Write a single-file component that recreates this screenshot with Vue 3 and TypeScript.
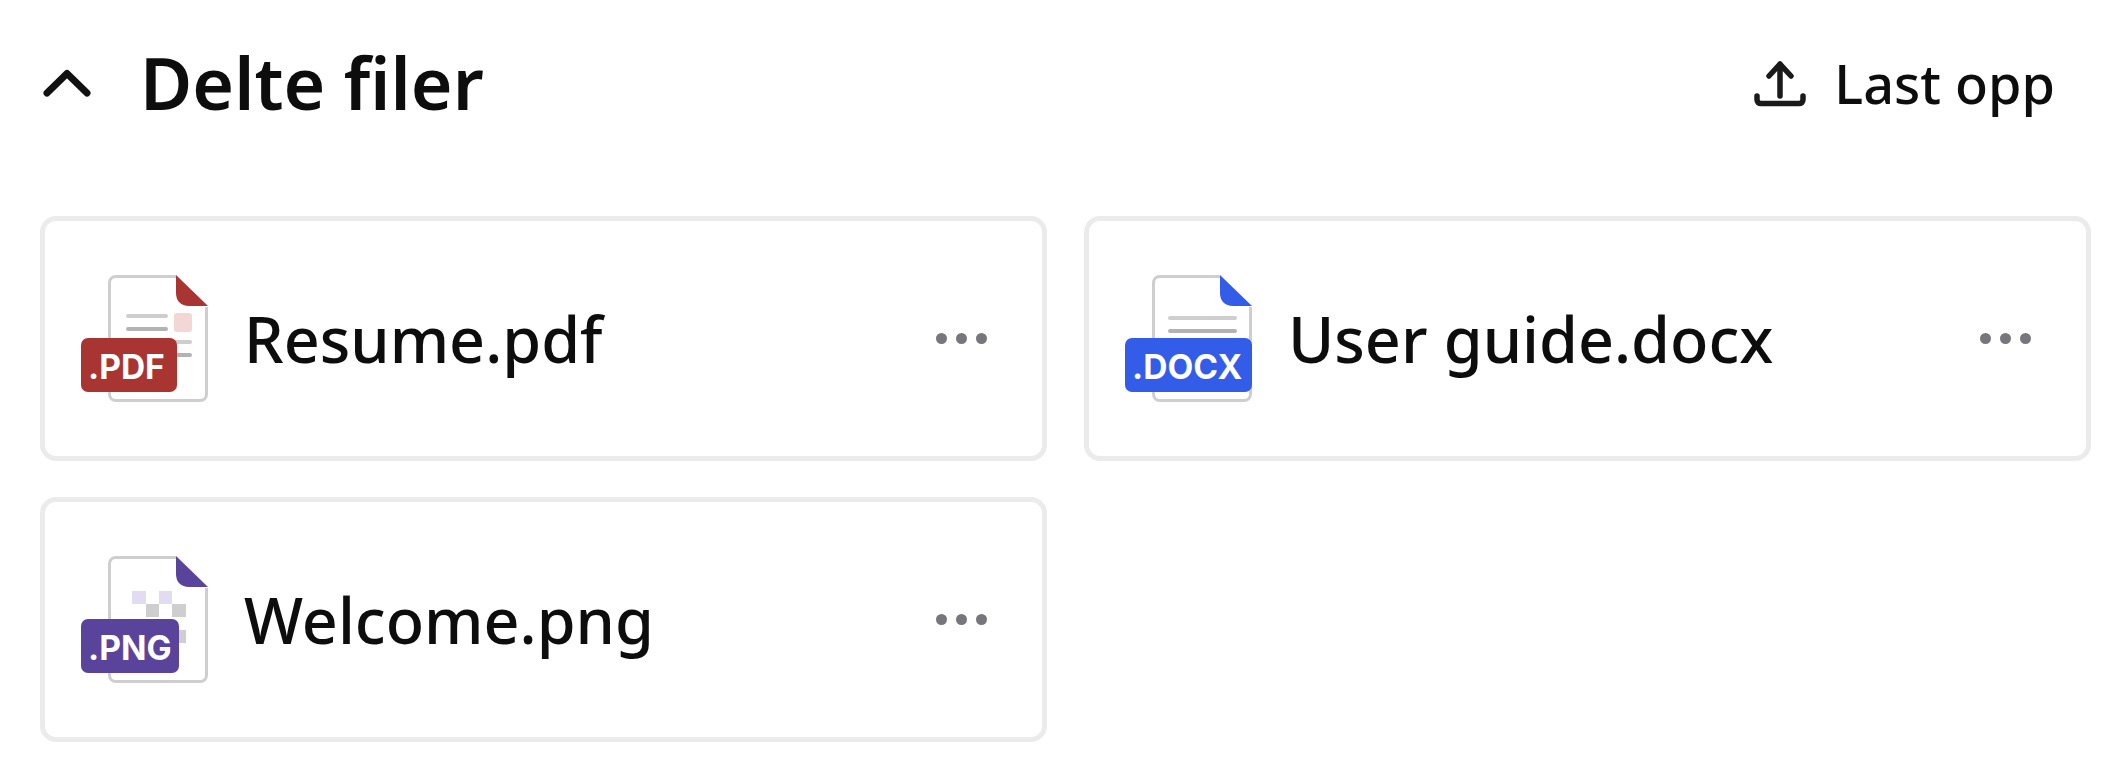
<script setup lang="ts">
interface FileItem {
  name: string
  ext: string
  color: string
  badgeWidth: number
  kind: 'pdf' | 'doc' | 'png'
}

const files: FileItem[] = [
  { name: 'Resume.pdf', ext: '.PDF', color: '#a83531', badgeWidth: 96, kind: 'pdf' },
  { name: 'User guide.docx', ext: '.DOCX', color: '#335ce8', badgeWidth: 127, kind: 'doc' },
  { name: 'Welcome.png', ext: '.PNG', color: '#5a449b', badgeWidth: 98, kind: 'png' },
]
</script>

<template>
  <section class="panel">
    <header class="head">
      <div class="title">
        <svg class="chevron" width="56" height="40" viewBox="0 0 56 40" fill="none">
          <path d="M7 30 27 10.500 47 30" stroke="#111" stroke-width="7" stroke-linecap="round" stroke-linejoin="round" />
        </svg>
        <h2>Delte filer</h2>
      </div>
      <button class="upload" type="button">
        <svg width="52" height="48" viewBox="0 0 52 48" fill="none">
          <path d="M26 5v32M15 17 26 5l11 12" stroke="#1a1a1a" stroke-width="5.500" stroke-linecap="round" stroke-linejoin="round" />
          <path d="M3 37v3.500c0 2.500 1.500 4 4 4h38c2.500 0 4-1.500 4-4V37" stroke="#1a1a1a" stroke-width="5.500" stroke-linecap="round" stroke-linejoin="round" />
        </svg>
        <span>Last opp</span>
      </button>
    </header>

    <div class="grid">
      <article v-for="file in files" :key="file.name" class="card">
        <svg class="file-icon" width="128" height="128" viewBox="0 0 128 128" fill="none">
          <path d="M95 1.500H35c-4 0-6.500 2.500-6.500 6.500v111c0 4 2.500 6.500 6.500 6.500h84c4 0 6.500-2.500 6.500-6.500V32" stroke="#cecece" stroke-width="3" />
          <path d="M95 0 127 31H108c-8 0-13-5-13-13Z" :fill="file.color" />
          <template v-if="file.kind === 'pdf'">
            <rect x="45" y="39" width="42" height="4" rx="2" fill="#cecece" />
            <rect x="45" y="52" width="42" height="4" rx="2" fill="#b3b3b3" />
            <rect x="93" y="38" width="18" height="19" rx="3" fill="#f3d6d6" />
            <rect x="45" y="65" width="66" height="4" rx="2" fill="#cecece" />
            <rect x="45" y="78" width="66" height="4" rx="2" fill="#b3b3b3" />
          </template>
          <template v-else-if="file.kind === 'doc'">
            <rect x="43" y="41" width="69" height="4" rx="2" fill="#cecece" />
            <rect x="43" y="54" width="69" height="4" rx="2" fill="#b3b3b3" />
          </template>
          <template v-else>
            <rect x="51" y="35" width="14" height="13" fill="#e2dcf2" />
            <rect x="78" y="35" width="13" height="13" fill="#e2dcf2" />
            <rect x="65" y="48" width="13" height="13" fill="#cecece" />
            <rect x="91" y="48" width="14" height="13" fill="#cecece" />
            <rect x="91" y="74" width="14" height="13" fill="#cecece" />
          </template>
          <rect x="0" y="63" :width="file.badgeWidth" height="54" rx="7" :fill="file.color" />
          <text x="7" y="104" class="ext">{{ file.ext }}</text>
        </svg>
        <span class="name">{{ file.name }}</span>
        <button class="more" type="button" aria-label="Mer">
          <i /><i /><i />
        </button>
      </article>
    </div>
  </section>
</template>

<style scoped>
.panel {
  box-sizing: border-box;
  width: 2128px;
  height: 770px;
  padding: 40px 37px 28px 40px;
  font-family: "Noto Sans", sans-serif;
  color: #0d0d0d;
  background: #fff;
}

.head {
  display: flex;
  align-items: center;
  justify-content: space-between;
  height: 86px;
  margin-bottom: 90px;
}

.title {
  display: flex;
  align-items: center;
  gap: 44px;
}

.chevron {
  flex: none;
}

h2 {
  margin: 0;
  font-size: 71.5px;
  line-height: 86px;
  font-weight: 600;
}

.upload {
  display: flex;
  align-items: center;
  gap: 28px;
  padding: 0;
  margin-right: 36px;
  border: 0;
  background: none;
  font: inherit;
  font-size: 54px;
  font-weight: 500;
  line-height: 84px;
  color: inherit;
}

.grid {
  display: grid;
  grid-template-columns: 1fr 1fr;
  gap: 36px 37px;
}

.card {
  box-sizing: border-box;
  display: flex;
  align-items: center;
  height: 245px;
  padding: 0 55px 0 36px;
  border: 5px solid #ebebeb;
  border-radius: 16px;
}

.file-icon {
  flex: none;
  overflow: visible;
}

.ext {
  font-family: Inter, sans-serif;
  font-size: 33.5px;
  font-weight: 700;
  fill: #fff;
}

.name {
  flex: 1;
  margin-left: 35px;
  font-size: 62.8px;
  font-weight: 500;
  line-height: 80px;
}

.more {
  display: flex;
  gap: 9px;
  padding: 0;
  border: 0;
  background: none;
}

.more i {
  display: block;
  width: 11px;
  height: 11px;
  border-radius: 50%;
  background: #77767a;
}
</style>
